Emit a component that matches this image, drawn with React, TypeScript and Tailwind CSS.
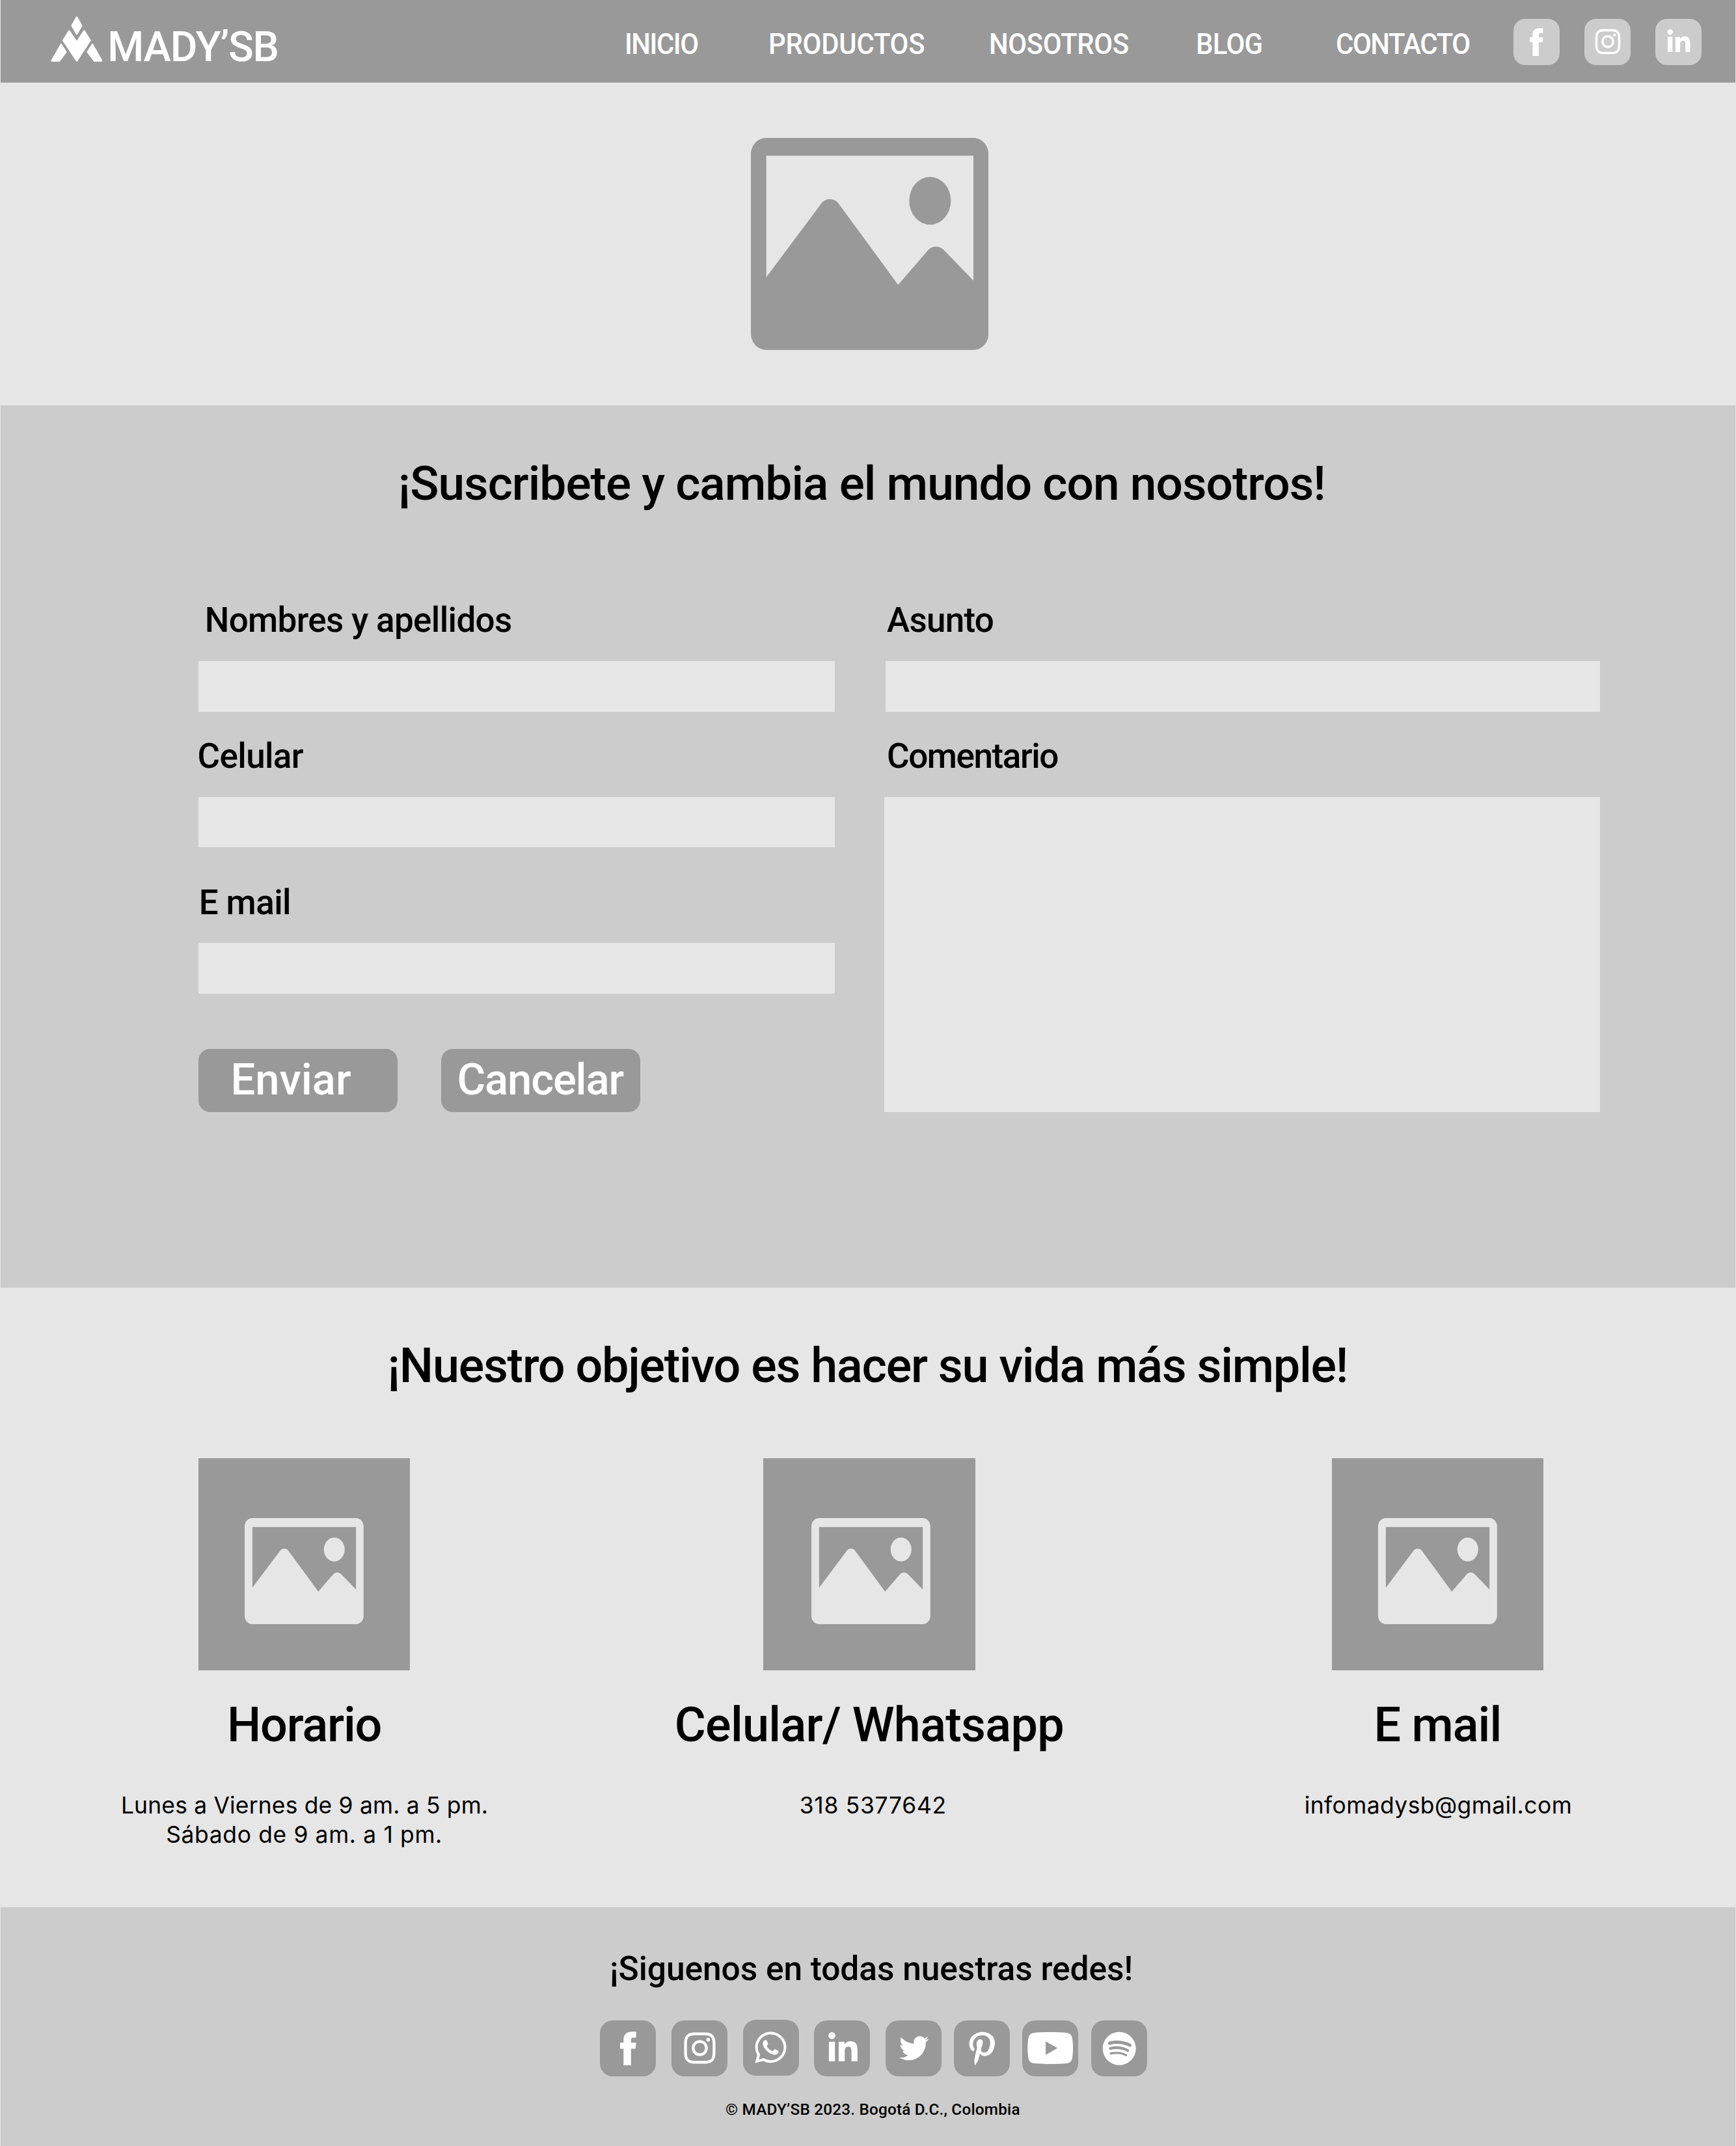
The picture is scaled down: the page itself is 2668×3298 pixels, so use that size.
import type { ReactNode } from "react";
import {
  FaInstagram,
  FaLinkedinIn,
  FaPinterestP,
  FaSpotify,
  FaTwitter,
  FaWhatsapp,
  FaYoutube,
} from "react-icons/fa";

const navItems = [
  { label: "INICIO", cls: "w-[221.1px] tracking-[-1.6px]" },
  { label: "PRODUCTOS", cls: "w-[338.7px] tracking-[-0.25px]" },
  { label: "NOSOTROS", cls: "w-[317.8px] tracking-[-0.4px]" },
  { label: "BLOG", cls: "w-[214.7px] tracking-[-0.7px]" },
  { label: "CONTACTO", cls: "w-[273.8px] tracking-[-1.5px]" },
];

function LogoMark() {
  return (
    <svg
      viewBox="23 29 239 210"
      className="mt-[24.6px] ml-[76.7px] h-[70px] w-[79.7px] shrink-0 fill-white stroke-white"
      strokeWidth="8"
      strokeLinejoin="round"
    >
      <path d="M143 34 L164.500 72 L143 110 L121.500 72Z" />
      <path d="M108 97 L143 149 L177 97 L204 140 L143 234 L81 140Z" />
      <path d="M71 159 L92.500 194 L62 234 L28 234Z" />
      <path d="M215 159 L193.500 194 L224 234 L257 234Z" />
    </svg>
  );
}

function FacebookIcon({ className }: { className: string }) {
  return (
    <svg viewBox="0 0 24.600 52.700" preserveAspectRatio="none" className={className} fill="currentColor">
      <path d="M24.600 0.200 H19.500 C9.500 0.200 5.300 4.500 5.300 12.500 V17.300 H0 V26.600 H5.300 V52.700 H16.800 V26.600 H23.800 L24.600 17.300 H16.800 V13.500 C16.800 10.500 17.800 9.400 20.300 9.400 H24.600Z" />
    </svg>
  );
}

function PictureIcon({ className }: { className: string }) {
  return (
    <svg viewBox="100 96 1096.500 977" preserveAspectRatio="none" className={className} fill="currentColor">
      <path
        fillRule="evenodd"
        d="M170 96 H1126 C1165 96 1196 130 1196 172 V997 C1196 1039 1165 1073 1126 1073 H170 C131 1073 100 1039 100 997 V172 C100 130 131 96 170 96Z
           M171 178 V738 L426 397 Q441 378 464 378 Q488 378 503 397 L779 773 L916 614 Q931 597 953 597 Q973 597 990 613 L1126 754 V178Z"
      />
      <ellipse cx="926" cy="385.500" rx="96" ry="110" />
    </svg>
  );
}

function HeaderSocial({ children }: { children: ReactNode }) {
  return (
    <a className="mt-[29px] flex h-[70.6px] w-[70.2px] shrink-0 items-center justify-center rounded-[18px] bg-[#cccccc] text-white">
      {children}
    </a>
  );
}

function FooterSocial({ className = "", children }: { className?: string; children: ReactNode }) {
  return (
    <a
      className={
        "flex h-[86px] w-[86.3px] shrink-0 items-center justify-center rounded-[20px] bg-[#999999] text-white " +
        className
      }
    >
      {children}
    </a>
  );
}

function Label({ className, children }: { className: string; children: ReactNode }) {
  return <label className={"block h-[53px] pt-px text-[53px] leading-none font-medium " + className}>{children}</label>;
}

function Card({
  title,
  titleClass,
  iconClass,
  children,
}: {
  title: string;
  titleClass: string;
  iconClass: string;
  children: ReactNode;
}) {
  return (
    <article className="flex w-[600px] shrink-0 flex-col items-center">
      <div className="h-[325.6px] w-[325.6px] bg-[#999999] pt-[91.9px]">
        <PictureIcon className={"h-[163px] w-[182.9px] text-[#e6e6e6] " + iconClass} />
      </div>
      <h3 className={"mt-[48.5px] text-[73.7px] leading-none font-medium " + titleClass}>{title}</h3>
      <div className="mt-[62.7px] flex flex-col items-center font-['Inter',sans-serif] text-[35.4px] leading-[45px]">
        {children}
      </div>
    </article>
  );
}

export default function App() {
  return (
    <div className="h-[3298px] w-[2668px] overflow-hidden bg-[#e6e6e6] px-px font-['Roboto',sans-serif] whitespace-nowrap text-black">
      <header className="flex h-[127px] items-start bg-[#999999] text-white">
        <LogoMark />
        <span className="mt-[40.5px] ml-[7.900px] w-[795.1px] shrink-0 text-[64px] leading-none font-medium tracking-[-1.3px]">
          MADY’SB
        </span>
        <nav className="mt-[45.1px] flex text-[45px] leading-none font-medium">
          {navItems.map((n) => (
            <a key={n.label} className={"shrink-0 " + n.cls}>
              <span className="inline-block origin-left scale-x-[0.93]">{n.label}</span>
            </a>
          ))}
        </nav>
        <div className="flex gap-[38.8px]">
          <HeaderSocial>
            <FacebookIcon className="h-[43.3px] w-[20.4px]" />
          </HeaderSocial>
          <HeaderSocial>
            <FaInstagram size={44} />
          </HeaderSocial>
          <HeaderSocial>
            <FaLinkedinIn size={40} className="mt-px ml-px" />
          </HeaderSocial>
        </div>
      </header>

      <section className="h-[496px] pt-[85px] pl-[1152.600px]">
        <PictureIcon className="h-[325.7px] w-[365.5px] text-[#999999]" />
      </section>

      <section className="h-[1356px] bg-[#cccccc] pt-[84.2px]">
        <h1 className="ml-[610.8px] text-[73px] leading-none font-medium tracking-[-0.96px]">
          ¡Suscribete y cambia el mundo con nosotros!
        </h1>
        <form className="mt-[146.2px] ml-[303.800px] flex">
          <div className="w-[977.8px] shrink-0">
            <Label className="pl-[9.9px] tracking-[-0.65px]">Nombres y apellidos</Label>
            <div className="mt-[36.8px] h-[77.6px] bg-[#e6e6e6]" />
            <Label className="mt-[41.1px] -ml-[1.200px] tracking-[-0.65px]">Celular</Label>
            <div className="mt-[36.7px] h-[77.7px] bg-[#e6e6e6]" />
            <Label className="mt-[57.6px] pl-[0.900px] tracking-[-0.6px]">E mail</Label>
            <div className="mt-[36.5px] h-[78px] bg-[#e6e6e6]" />
            <div className="mt-[84.4px] flex gap-[66.6px] text-[67px] leading-none font-medium text-white">
              <button
                type="button"
                className="h-[96.8px] w-[306.4px] rounded-[18px] bg-[#999999] pt-[14.3px] pb-[15px] pl-[49.6px] text-left"
              >
                Enviar
              </button>
              <button
                type="button"
                className="h-[96.8px] w-[306.4px] rounded-[18px] bg-[#999999] pt-[14.3px] pb-[15px] pl-[24.8px] text-left tracking-[-1.2px]"
              >
                Cancelar
              </button>
            </div>
          </div>
          <div className="ml-[76.6px] w-[1100.300px] shrink-0">
            <Label className="pl-[3.900px] tracking-[-0.74px]">Asunto</Label>
            <div className="mt-[36.8px] ml-[1.500px] h-[77.6px] bg-[#e6e6e6]" />
            <Label className="mt-[41.1px] pl-[3.900px] tracking-[-1.45px]">Comentario</Label>
            <div className="mt-[36.7px] h-[484px] bg-[#e6e6e6]" />
          </div>
        </form>
      </section>

      <section className="h-[952.2px] pt-[84.2px]">
        <h2 className="ml-[594.5px] text-[73.7px] leading-none font-medium tracking-[-1.22px]">
          ¡Nuestro objetivo es hacer su vida más simple!
        </h2>
        <div className="mt-[104.4px] ml-[166.600px] flex">
          <Card title="Horario" titleClass="tracking-[-1.13px]" iconClass="ml-[71.6px]">
            <p className="ml-px tracking-[0.2px]">Lunes a Viernes de 9 am. a 5 pm.</p>
            <p className="tracking-[0.66px]">Sábado de 9 am. a 1 pm.</p>
          </Card>
          <div className="ml-[268.2px]">
            <Card title="Celular/ Whatsapp" titleClass="tracking-[-0.66px]" iconClass="ml-[74.1px]">
              <p className="ml-[12px] tracking-[0.72px]">318 5377642</p>
            </Card>
          </div>
          <div className="ml-[273.6px]">
            <Card title="E mail" titleClass="tracking-[-0.95px]" iconClass="ml-[71.6px]">
              <p className="ml-[2px] tracking-[0.46px]">infomadysb@gmail.com</p>
            </Card>
          </div>
        </div>
      </section>

      <footer className="h-[366.8px] bg-[#cccccc] pt-[68.6px]">
        <h2 className="ml-[936px] text-[51.5px] leading-none font-medium tracking-[-0.07px]">
          ¡Siguenos en todas nuestras redes!
        </h2>
        <div className="mt-[53.7px] ml-[921.2px] flex">
          <FooterSocial>
            <FacebookIcon className="h-[52.7px] w-[24.6px]" />
          </FooterSocial>
          <FooterSocial className="ml-[23.4px]">
            <FaInstagram size={55} />
          </FooterSocial>
          <FooterSocial className="-mt-px ml-[23.5px]">
            <FaWhatsapp size={55} />
          </FooterSocial>
          <FooterSocial className="ml-[23px]">
            <FaLinkedinIn size={51} className="mt-[2px] ml-[3px]" />
          </FooterSocial>
          <FooterSocial className="ml-[23.9px]">
            <FaTwitter size={45.5} />
          </FooterSocial>
          <FooterSocial className="ml-[18.7px]">
            <FaPinterestP size={52.5} />
          </FooterSocial>
          <FooterSocial className="ml-[18.7px]">
            <FaYoutube viewBox="14.93 64 546.130 384" size={70.4} className="h-[49px] w-[70.4px]" />
          </FooterSocial>
          <FooterSocial className="ml-[19.3px]">
            <FaSpotify size={52.5} />
          </FooterSocial>
        </div>
        <p className="mt-[38.6px] ml-[1114px] text-[24.3px] leading-none font-medium tracking-[0.2px]">
          © MADY’SB 2023. Bogotá D.C., Colombia
        </p>
      </footer>
    </div>
  );
}
